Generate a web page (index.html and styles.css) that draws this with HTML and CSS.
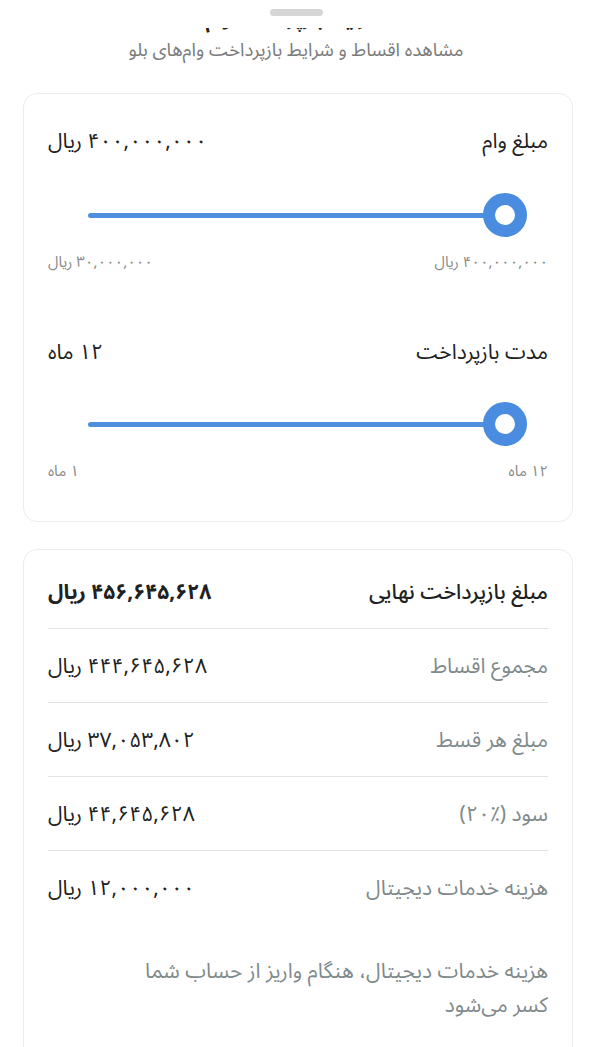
FILE: index.html
```html
<!DOCTYPE html>
<html lang="fa" dir="rtl">

<head>
    <meta charset="UTF-8">
    <meta name="viewport" content="width=device-width, initial-scale=1.0">
    <title>محاسبه اقساط وام</title>
    <link rel="stylesheet" href="styles.css">
</head>

<body>
    <div class="sheet">
        <div class="sheet-handle"></div>
        <div class="title-peek">
            <h2>شرایط بازپرداخت وام</h2>
        </div>
        <p class="subtitle">مشاهده اقساط و شرایط بازپرداخت وام‌های بلو</p>

        <div class="card">
            <div class="field">
                <div class="field-head">
                    <span>مبلغ وام</span>
                    <span>۴۰۰,۰۰۰,۰۰۰ ریال</span>
                </div>
                <div class="slider">
                    <div class="track"></div>
                    <div class="thumb"></div>
                </div>
                <div class="range">
                    <span>۴۰۰,۰۰۰,۰۰۰ ریال</span>
                    <span>۳۰,۰۰۰,۰۰۰ ریال</span>
                </div>
            </div>

            <div class="field">
                <div class="field-head">
                    <span>مدت بازپرداخت</span>
                    <span>۱۲ ماه</span>
                </div>
                <div class="slider">
                    <div class="track"></div>
                    <div class="thumb"></div>
                </div>
                <div class="range">
                    <span>۱۲ ماه</span>
                    <span>۱ ماه</span>
                </div>
            </div>
        </div>

        <div class="card summary">
            <div class="row total">
                <span class="label">مبلغ بازپرداخت نهایی</span>
                <span class="value">۴۵۶,۶۴۵,۶۲۸ ریال</span>
            </div>
            <div class="row">
                <span class="label">مجموع اقساط</span>
                <span class="value">۴۴۴,۶۴۵,۶۲۸ ریال</span>
            </div>
            <div class="row">
                <span class="label">مبلغ هر قسط</span>
                <span class="value">۳۷,۰۵۳,۸۰۲ ریال</span>
            </div>
            <div class="row">
                <span class="label">سود (٪۲۰)</span>
                <span class="value">۴۴,۶۴۵,۶۲۸ ریال</span>
            </div>
            <div class="row last">
                <span class="label">هزینه خدمات دیجیتال</span>
                <span class="value">۱۲,۰۰۰,۰۰۰ ریال</span>
            </div>
            <p class="note">هزینه خدمات دیجیتال، هنگام واریز از حساب شما کسر می‌شود</p>
        </div>
    </div>
</body>

</html>
```

FILE: styles.css
```css
body {
    margin: 0;
    padding: 0;
    background-color: #fff;
    font-family: "Noto Sans Arabic", "DejaVu Sans", sans-serif;
    color: #212121;
}

.sheet {
    padding-top: 9px;
    height: 1038px;
    overflow: hidden;
}

.sheet-handle {
    width: 53px;
    height: 7px;
    margin: 0 auto;
    border-radius: 4px;
    background-color: #d6d6d6;
}

.title-peek {
    height: 7px;
    margin-top: 12px;
    overflow: hidden;
    display: flex;
    align-items: flex-end;
    justify-content: center;
}

.title-peek h2 {
    margin: 0;
    font-size: 20px;
    line-height: 26px;
    font-weight: 700;
    white-space: nowrap;
    transform: translateY(-3px);
}

.subtitle {
    margin: 4px 0 0;
    text-align: center;
    font-size: 18.5px;
    line-height: 24px;
    color: #7a7a7a;
}

.card {
    margin: 30px 19px 0 23px;
    padding: 32px 24px 40px;
    border: 1px solid #ececec;
    border-radius: 14px;
}

.field + .field {
    margin-top: 65px;
}

.field-head,
.range,
.row {
    display: flex;
    justify-content: space-between;
    align-items: center;
}

.field-head {
    font-size: 21px;
    line-height: 30px;
}

.slider {
    position: relative;
    height: 44px;
    margin: 37px 21px 0 40px;
    display: flex;
    align-items: center;
}

.field + .field .slider {
    margin-top: 35px;
}

.track {
    width: 100%;
    height: 5px;
    margin-right: 22px;
    border-radius: 3px;
    background-color: #4f8fdd;
}

.thumb {
    position: absolute;
    right: 0;
    top: 0;
    width: 44px;
    height: 44px;
    box-sizing: border-box;
    border: 12px solid #4a8ce0;
    border-radius: 50%;
    background-color: #fff;
}

.range {
    margin-top: 15px;
    font-size: 15px;
    line-height: 20px;
    color: #8a8a8a;
}

.summary {
    margin-top: 27px;
    padding: 5px 24px 80px;
    border-bottom-left-radius: 0;
    border-bottom-right-radius: 0;
}

.row {
    padding: 22px 0 21px;
    font-size: 21px;
    line-height: 30px;
    border-bottom: 1px solid #e3e3e3;
}

.row.last {
    border-bottom: none;
}

.row .label {
    color: #7f8a8c;
}

.row.total .label {
    color: #212121;
    font-weight: 500;
}

.row.total .value {
    font-weight: 700;
}

.note {
    max-width: 440px;
    margin: 30px 0 0;
    font-size: 21px;
    line-height: 34px;
    color: #7f8a8c;
}
```
